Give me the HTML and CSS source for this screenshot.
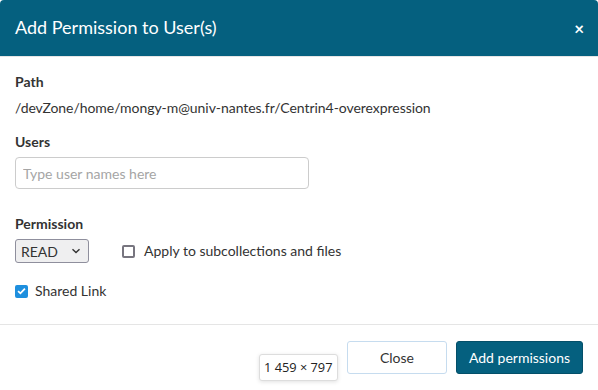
FILE: index.html
```html
<!DOCTYPE html>
<html lang="en">
  <head>
    <meta charset="UTF-8" />
    <title>Add Permission to User(s)</title>
    <link rel="stylesheet" href="styles.css">
  </head>
  <body>
    <div class="modal">
      <div class="modal-header">
        <h4 class="modal-title">Add Permission to User(s)</h4>
        <button class="close" type="button">&times;</button>
      </div>

      <div class="modal-body">
        <div class="group">
          <label class="label">Path</label>
          <div class="path">/devZone/home/mongy-m@univ-nantes.fr/Centrin4-overexpression</div>
        </div>

        <div class="group">
          <label class="label">Users</label>
          <input class="users-input" type="text" placeholder="Type user names here" />
        </div>

        <div class="group perm">
          <label class="label">Permission</label>
          <div class="perm-row">
            <div class="select">
              <span>READ</span>
              <svg width="10" height="6" viewBox="0 0 10 6"><path d="M1.5 1.2 5 4.6 8.5 1.2" fill="none" stroke="#333" stroke-width="1.4"/></svg>
            </div>
            <label class="check">
              <span class="box"></span>
              Apply to subcollections and files
            </label>
          </div>
        </div>

        <label class="check shared">
          <span class="box checked">
            <svg width="10" height="8" viewBox="0 0 10 8"><path d="M1.2 4.2 3.8 6.6 8.8 1.4" fill="none" stroke="#fff" stroke-width="2"/></svg>
          </span>
          Shared Link
        </label>
      </div>

      <div class="modal-footer">
        <button class="btn btn-default" type="button">Close</button>
        <button class="btn btn-primary" type="button">Add permissions</button>
      </div>

      <div class="size-badge">1 459 &times; 797</div>
    </div>
  </body>
</html>
```

FILE: styles.css
```css
/* page */
body {
  margin: 0;
  background-color: #fff;
  font-family: Lato, "Open Sans", sans-serif;
  font-size: 14px;
  color: #333;
}

.modal {
  position: relative;
  width: 598px;
  height: 390px;
  overflow: hidden;
}

/* header */
.modal-header {
  display: flex;
  align-items: center;
  justify-content: space-between;
  height: 56px;
  padding: 0 15px;
  background-color: #05607f;
  border-bottom: 1px solid #e5e5e5;
  border-radius: 4px 4px 0 0;
}

.modal-title {
  margin: 0;
  font-size: 18px;
  font-weight: 400;
  color: #fff;
  padding-bottom: 2px;
}

.close {
  border: 0;
  background: none;
  padding: 0;
  margin-right: -1px;
  font-family: Lato, sans-serif;
  font-size: 17px;
  font-weight: 700;
  color: #fff;
  line-height: 1;
}

/* body */
.modal-body {
  padding: 15px 15px 0;
}

.group {
  margin-bottom: 14px;
}

.label {
  display: block;
  font-weight: 700;
  line-height: 20px;
  margin-bottom: 6px;
}

.path {
  line-height: 20px;
  letter-spacing: -0.05px;
}

.users-input {
  box-sizing: border-box;
  width: 294px;
  height: 32px;
  margin: -1px 0 0;
  padding: 0 7px;
  border: 1px solid #ccc;
  border-radius: 4px;
  font-family: Lato, sans-serif;
  font-size: 14px;
  color: #333;
}

.users-input::placeholder {
  color: #a5a5a5;
}

.perm {
  margin-top: 25px;
  margin-bottom: 0;
}

.perm .label {
  margin-bottom: 5px;
}

.perm-row {
  display: flex;
  align-items: center;
  gap: 33px;
}

.select {
  box-sizing: border-box;
  display: flex;
  align-items: center;
  justify-content: space-between;
  width: 74px;
  height: 24px;
  padding: 0 7px 0 5px;
  background-color: #efeff0;
  border: 1px solid #8f8f9d;
  border-radius: 3px;
  font-size: 14px;
}

.check {
  display: flex;
  align-items: center;
  gap: 9px;
  line-height: 20px;
}

.box {
  box-sizing: border-box;
  display: flex;
  align-items: center;
  justify-content: center;
  width: 13px;
  height: 13px;
  border: 2px solid #77757f;
  border-radius: 2px;
}

.box.checked {
  background-color: #1e8fde;
  border-color: #1e8fde;
}

.shared {
  gap: 7px;
  margin-top: 18px;
}

/* footer */
.modal-footer {
  position: absolute;
  left: 0;
  right: 0;
  bottom: 0;
  display: flex;
  justify-content: flex-end;
  gap: 9px;
  padding: 16px 15px 16px;
  border-top: 1px solid #e5e5e5;
}

.btn {
  box-sizing: border-box;
  height: 33px;
  border-radius: 3px;
  font-family: Lato, sans-serif;
  font-size: 14px;
}

.btn-default {
  width: 100px;
  background-color: #fff;
  border: 1px solid #c6dcef;
  color: #333;
}

.btn-primary {
  width: 127px;
  background-color: #05607f;
  border: 1px solid #044f69;
  color: #fff;
}

/* screen size tooltip */
.size-badge {
  position: absolute;
  left: 259px;
  top: 354px;
  padding: 0 4px;
  height: 25px;
  line-height: 25px;
  background-color: #fff;
  border: 1px solid #ddd;
  border-radius: 3px;
  box-shadow: 0 1px 4px rgba(0, 0, 0, 0.12);
  font-family: "Open Sans", sans-serif;
  font-size: 12.8px;
  color: #222;
}
```
